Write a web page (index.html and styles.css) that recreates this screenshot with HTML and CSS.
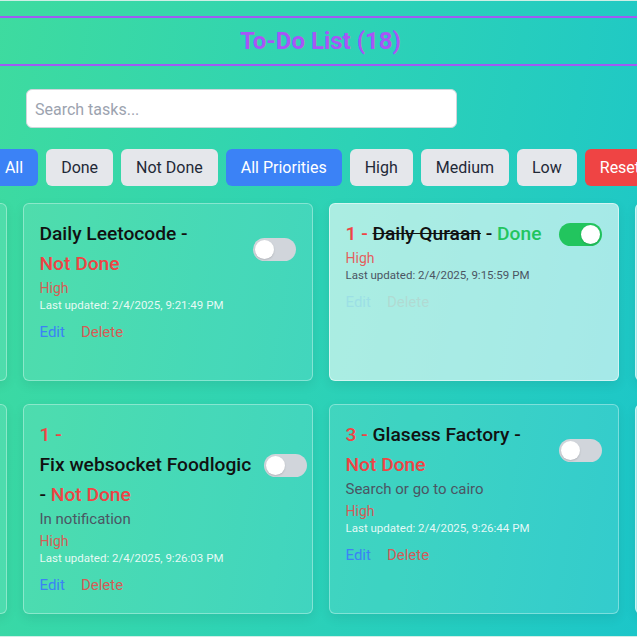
FILE: index.html
```html
<!DOCTYPE html>
<html lang="en">

<head>
    <meta charset="UTF-8">
    <meta name="viewport" content="width=device-width, initial-scale=1.0">
    <title>To-Do List</title>
    <link rel="stylesheet" href="styles.css">
</head>

<body>
    <div class="app">
        <header class="top">
            <h1>To-Do List (18)</h1>
        </header>

        <div class="search-row">
            <input type="text" class="search" placeholder="Search tasks...">
        </div>

        <div class="filters">
            <button class="btn blue">All</button>
            <button class="btn">Done</button>
            <button class="btn">Not Done</button>
            <button class="btn blue">All Priorities</button>
            <button class="btn">High</button>
            <button class="btn">Medium</button>
            <button class="btn">Low</button>
            <button class="btn red">Reset</button>
        </div>

        <ul class="tasks">
            <!-- row 1 -->
            <li class="task">
                <div class="task-head">
                    <h3><span class="num">2 - </span><span class="name">Gym session</span> - <span class="status">Not Done</span></h3>
                    <span class="switch"><span class="knob"></span></span>
                </div>
                <p class="priority">Medium</p>
                <p class="updated">Last updated: 2/4/2025, 9:10:12 PM</p>
                <div class="actions"><a href="javascript:;" class="edit">Edit</a><a href="javascript:;" class="delete">Delete</a></div>
            </li>
            <li class="task">
                <div class="task-head">
                    <h3><span class="name">Daily Leetocode</span> - <span class="status">Not Done</span></h3>
                    <span class="switch"><span class="knob"></span></span>
                </div>
                <p class="priority">High</p>
                <p class="updated">Last updated: 2/4/2025, 9:21:49 PM</p>
                <div class="actions"><a href="javascript:;" class="edit">Edit</a><a href="javascript:;" class="delete">Delete</a></div>
            </li>
            <li class="task done">
                <div class="task-head">
                    <h3><span class="num">1 - </span><span class="name">Daily Quraan</span> - <span class="status">Done</span></h3>
                    <span class="switch on"><span class="knob"></span></span>
                </div>
                <p class="priority">High</p>
                <p class="updated">Last updated: 2/4/2025, 9:15:59 PM</p>
                <div class="actions"><a href="javascript:;" class="edit">Edit</a><a href="javascript:;" class="delete">Delete</a></div>
            </li>
            <li class="task done">
                <div class="task-head">
                    <h3><span class="num">2 - </span><span class="name">Read book</span> - <span class="status">Done</span></h3>
                    <span class="switch on"><span class="knob"></span></span>
                </div>
                <p class="priority">Low</p>
                <p class="updated">Last updated: 2/4/2025, 9:16:30 PM</p>
                <div class="actions"><a href="javascript:;" class="edit">Edit</a><a href="javascript:;" class="delete">Delete</a></div>
            </li>

            <!-- row 2 -->
            <li class="task">
                <div class="task-head">
                    <h3><span class="num">2 - </span><span class="name">Team meeting</span> - <span class="status">Not Done</span></h3>
                    <span class="switch"><span class="knob"></span></span>
                </div>
                <p class="desc">Prepare the weekly notes</p>
                <p class="priority">Medium</p>
                <p class="updated">Last updated: 2/4/2025, 9:24:18 PM</p>
                <div class="actions"><a href="javascript:;" class="edit">Edit</a><a href="javascript:;" class="delete">Delete</a></div>
            </li>
            <li class="task">
                <div class="task-head">
                    <h3><span class="num">1 - </span><span class="name">Fix websocket Foodlogic</span> - <span class="status">Not Done</span></h3>
                    <span class="switch"><span class="knob"></span></span>
                </div>
                <p class="desc">In notification</p>
                <p class="priority">High</p>
                <p class="updated">Last updated: 2/4/2025, 9:26:03 PM</p>
                <div class="actions"><a href="javascript:;" class="edit">Edit</a><a href="javascript:;" class="delete">Delete</a></div>
            </li>
            <li class="task">
                <div class="task-head">
                    <h3><span class="num">3 - </span><span class="name">Glasess Factory</span> - <span class="status">Not Done</span></h3>
                    <span class="switch"><span class="knob"></span></span>
                </div>
                <p class="desc">Search or go to cairo</p>
                <p class="priority">High</p>
                <p class="updated">Last updated: 2/4/2025, 9:26:44 PM</p>
                <div class="actions"><a href="javascript:;" class="edit">Edit</a><a href="javascript:;" class="delete">Delete</a></div>
            </li>
            <li class="task done">
                <div class="task-head">
                    <h3><span class="num">4 - </span><span class="name">Call mom</span> - <span class="status">Done</span></h3>
                    <span class="switch on"><span class="knob"></span></span>
                </div>
                <p class="priority">Low</p>
                <p class="updated">Last updated: 2/4/2025, 9:27:05 PM</p>
                <div class="actions"><a href="javascript:;" class="edit">Edit</a><a href="javascript:;" class="delete">Delete</a></div>
            </li>
        </ul>
    </div>
</body>

</html>
```

FILE: styles.css
```css
* {
    margin: 0;
    padding: 0;
    box-sizing: border-box;
}

ul,
li {
    list-style: none;
}

body {
    height: 637px;
    overflow: hidden;
    font-family: Roboto, "Noto Sans", sans-serif;
    color: #111827;
    background: linear-gradient(100deg, #3edb9f 0%, #2dd2b6 50%, #1cc6c9 100%);
    border-top: 1px solid #cfefe6;
    border-bottom: 1px solid #cfefe6;
}

.app {
    padding-top: 15px;
}

/* header */
.top {
    border-top: 2px solid #9f5af4;
    border-bottom: 2px solid #9f5af4;
    padding: 5px 0 5px 4px;
    text-align: center;
}

.top h1 {
    font-size: 24px;
    line-height: 36px;
    font-weight: 700;
    color: #a855f7;
}

/* search */
.search-row {
    padding: 23px 26px 0;
}

.search {
    display: block;
    width: 431px;
    height: 39px;
    padding: 2px 8px 0;
    border: 1px solid #d1d5db;
    border-radius: 6px;
    background: #fff;
    font-family: inherit;
    font-size: 16px;
    outline: none;
}

.search::placeholder {
    color: #9ca3af;
}

/* filter buttons */
.filters {
    display: flex;
    justify-content: center;
    gap: 8px;
    margin-top: 21px;
    padding-left: 8px;
    white-space: nowrap;
}

.btn {
    flex-shrink: 0;
    padding: 8px 15px;
    border: none;
    border-radius: 6px;
    background: #e5e7eb;
    color: #1f2937;
    font-family: inherit;
    font-size: 16px;
    line-height: 21px;
}

.btn.blue {
    background: #3b82f6;
    color: #fff;
}

.btn.red {
    background: #ef4444;
    color: #fff;
}

/* task cards */
.tasks {
    display: grid;
    grid-template-columns: repeat(4, 290px);
    grid-template-rows: 178px 210px;
    justify-content: center;
    column-gap: 16px;
    row-gap: 23px;
    margin-top: 17px;
    padding-left: 4px;
}

.task {
    padding: 15px 16px 16px;
    border: 1px solid rgba(255, 255, 255, 0.35);
    border-radius: 6px;
    background: rgba(255, 255, 255, 0.1);
    box-shadow: 0 4px 12px rgba(0, 0, 0, 0.08);
}

.task-head {
    display: flex;
    align-items: center;
    gap: 13px;
}

.task-head h3 {
    flex: 1;
    font-size: 19.2px;
    line-height: 30px;
    font-weight: 500;
    color: #111;
}

.task-head .num {
    color: #ef4444;
}

.task-head .name {
    white-space: nowrap;
}

.task-head .status {
    display: inline-block;
    white-space: nowrap;
    color: #ef4444;
}

.switch {
    display: flex;
    flex-shrink: 0;
    width: 43px;
    height: 23px;
    padding: 2px;
    border-radius: 12px;
    background: #d1d5db;
}

.switch .knob {
    width: 19px;
    height: 19px;
    border-radius: 50%;
    background: #fff;
    box-shadow: 0 1px 2px rgba(0, 0, 0, 0.15);
}

.switch.on {
    justify-content: flex-end;
    background: #22c55e;
}

.desc {
    font-size: 15px;
    line-height: 18px;
    margin-bottom: 4px;
    color: #4b5563;
}

.priority {
    font-size: 14px;
    line-height: 18px;
    color: rgba(239, 68, 68, 0.85);
}

.updated {
    font-size: 11.5px;
    line-height: 16px;
    color: rgba(255, 255, 255, 0.88);
}

.actions {
    display: flex;
    gap: 16px;
    margin-top: 9px;
    font-size: 15px;
    line-height: 20px;
}

.actions a {
    text-decoration: none;
}

.actions .edit {
    color: #3b82f6;
}

.actions .delete {
    color: rgba(239, 68, 68, 0.85);
}

/* finished tasks */
.task.done {
    background: rgba(255, 255, 255, 0.6);
    border-color: rgba(255, 255, 255, 0.5);
}

.task.done .name {
    text-decoration: line-through;
}

.task.done .status {
    color: #22c55e;
}

.task.done .updated {
    color: #4b5563;
}

.task.done .actions {
    opacity: 0.12;
}
```
